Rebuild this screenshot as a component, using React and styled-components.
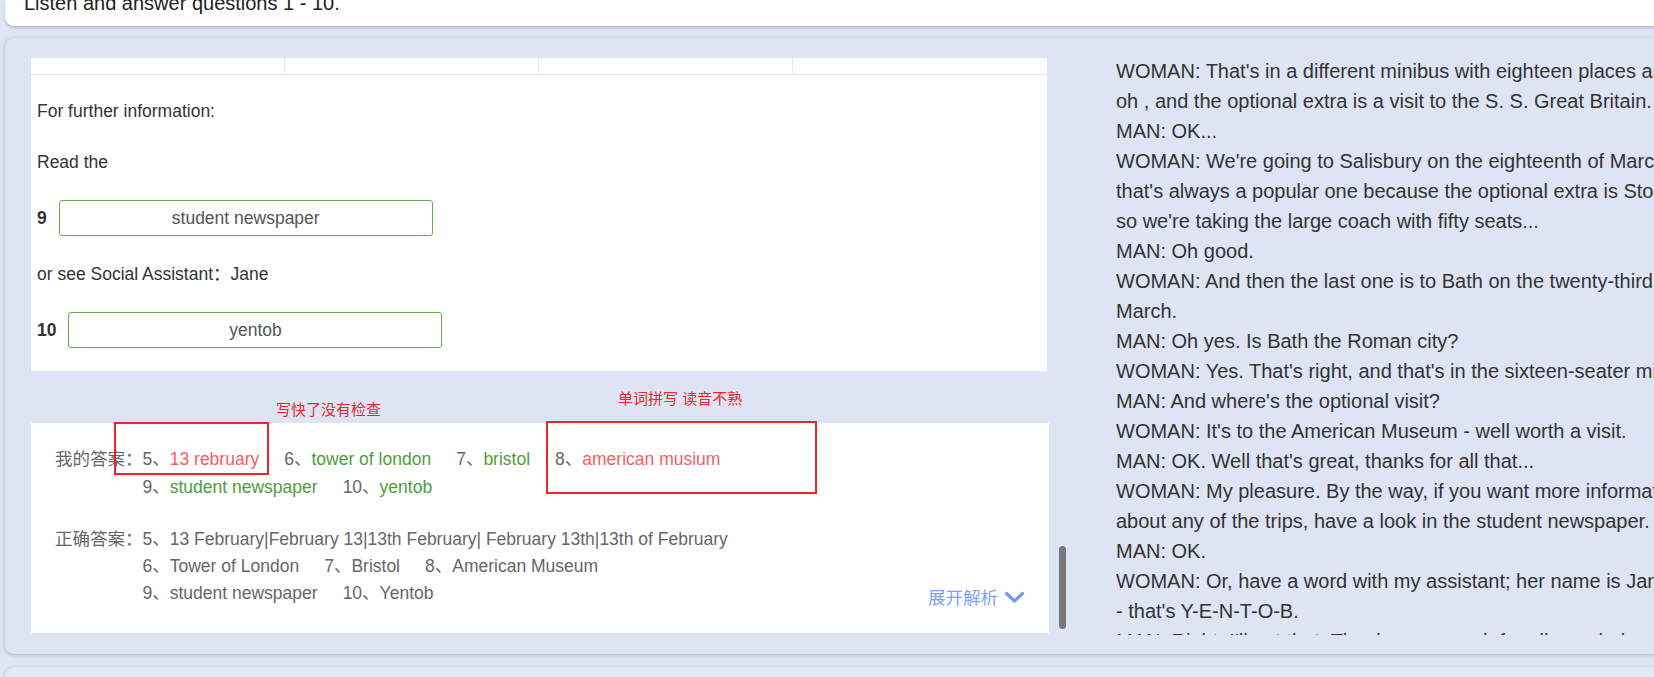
import React from "react";
import styled, { createGlobalStyle } from "styled-components";

const GlobalStyle = createGlobalStyle`
  html, body {
    margin: 0;
    padding: 0;
    overflow: hidden;
    background: #dfe5f3;
    font-family: "Liberation Sans", Arial, "Noto Sans CJK SC", sans-serif;
  }
`;

const myAnswers = [
  { no: 5, text: "13 rebruary", ok: false },
  { no: 6, text: "tower of london", ok: true },
  { no: 7, text: "bristol", ok: true },
  { no: 8, text: "american musium", ok: false },
  { no: 9, text: "student newspaper", ok: true },
  { no: 10, text: "yentob", ok: true },
];

const rightAnswers = [
  { no: 5, text: "13 February|February 13|13th February| February 13th|13th of February" },
  { no: 6, text: "Tower of London" },
  { no: 7, text: "Bristol" },
  { no: 8, text: "American Museum" },
  { no: 9, text: "student newspaper" },
  { no: 10, text: "Yentob" },
];

const transcript = [
  "WOMAN: That's in a different minibus with eighteen places and it's twenty-four pounds,",
  "oh , and the optional extra is a visit to the S. S. Great Britain.",
  "MAN: OK...",
  "WOMAN: We're going to Salisbury on the eighteenth of March and",
  "that's always a popular one because the optional extra is Stonehenge,",
  "so we're taking the large coach with fifty seats...",
  "MAN: Oh good.",
  "WOMAN: And then the last one is to Bath on the twenty-third of",
  "March.",
  "MAN: Oh yes. Is Bath the Roman city?",
  "WOMAN: Yes. That's right, and that's in the sixteen-seater minibus.",
  "MAN: And where's the optional visit?",
  "WOMAN: It's to the American Museum - well worth a visit.",
  "MAN: OK. Well that's great, thanks for all that...",
  "WOMAN: My pleasure. By the way, if you want more information",
  "about any of the trips, have a look in the student newspaper.",
  "MAN: OK.",
  "WOMAN: Or, have a word with my assistant; her name is Jane",
  "- that's Y-E-N-T-O-B.",
  "MAN: Right, I'll get that. Thanks very much for all your help.",
];

const App = () => {
  return (
    <>
      <GlobalStyle />
      <Page>
        <TopCard>
          <TopTitle>Listen and answer questions 1 - 10.</TopTitle>
        </TopCard>

        <MainCard>
          <LeftCol>
            <QuestionPanel>
              <TableTail>
                <TableCell />
                <TableCell />
                <TableCell />
                <TableCell $last />
              </TableTail>
              <QuestionBody>
                <Para>For further information:</Para>
                <Para>Read the</Para>
                <InputRow>
                  <QNum>9</QNum>
                  <AnswerInput readOnly value="student newspaper" />
                </InputRow>
                <Para>or see Social Assistant：Jane</Para>
                <InputRow>
                  <QNum>10</QNum>
                  <AnswerInput readOnly value="yentob" />
                </InputRow>
              </QuestionBody>
            </QuestionPanel>

            <ResultPanel>
              <AnswerBlock>
                <BlockLabel>我的答案：</BlockLabel>
                <AnswerList>
                  {myAnswers.map((a) => (
                    <AnswerItem key={a.no}>
                      {a.no}、<AnswerText $tone={a.ok ? "good" : "bad"}>{a.text}</AnswerText>
                    </AnswerItem>
                  ))}
                </AnswerList>
              </AnswerBlock>

              <AnswerBlock>
                <BlockLabel>正确答案：</BlockLabel>
                <AnswerList $tight>
                  {rightAnswers.map((a) => (
                    <AnswerItem key={a.no}>
                      {a.no}、{a.text}
                    </AnswerItem>
                  ))}
                </AnswerList>
                <Toggle>
                  展开解析
                  <svg width="21" height="13" viewBox="0 0 21 13" fill="none">
                    <path
                      d="M2.5 2.5 L10.5 10 L18.5 2.5"
                      stroke="#6f9cf3"
                      strokeWidth="3.2"
                      strokeLinecap="round"
                      strokeLinejoin="round"
                    />
                  </svg>
                </Toggle>
              </AnswerBlock>
            </ResultPanel>

            {/* hand-written marks over the result */}
            <Note style={{ left: 245, top: 342 }}>写快了没有检查</Note>
            <MarkBox style={{ left: 83, top: 364, width: 155, height: 53 }} />
            <Note style={{ left: 587, top: 331 }}>单词拼写 读音不熟</Note>
            <MarkBox style={{ left: 515, top: 363, width: 271, height: 73 }} />

            <ScrollThumb />
          </LeftCol>

          <RightCol>
            <Script>
              {transcript.map((line, i) => (
                <ScriptLine key={i}>{line}</ScriptLine>
              ))}
            </Script>
          </RightCol>
        </MainCard>

        <NextCard />
      </Page>
    </>
  );
};

export default App;

const Page = styled.div`
  width: 1900px;
  padding-left: 5px;
`;

const TopCard = styled.div`
  height: 26px;
  display: flex;
  align-items: flex-end;
  padding: 0 0 12px 19px;
  box-sizing: border-box;
  overflow: hidden;
  background: #fff;
  border-radius: 0 0 9px 9px;
  box-shadow: 0 2px 3px rgba(0, 0, 0, 0.16);
`;

const TopTitle = styled.div`
  font-size: 20px;
  line-height: 22px;
  color: #222;
`;

const MainCard = styled.section`
  margin-top: 12px;
  height: 616px;
  box-sizing: border-box;
  display: flex;
  padding: 20px 0 21px 26px;
  background: #dee4f4;
  border-radius: 9px;
  box-shadow: 0 1px 4px rgba(0, 0, 0, 0.22);
`;

const LeftCol = styled.div`
  position: relative;
  flex-shrink: 0;
  width: 1036px;
  height: 575px;
  overflow: hidden;
`;

const QuestionPanel = styled.div`
  width: 1016px;
  background: #fff;
  display: flex;
  flex-direction: column;
`;

const TableTail = styled.div`
  display: grid;
  grid-template-columns: repeat(4, 1fr);
  height: 16px;
  border-bottom: 1px solid #e6e6e6;
`;

const TableCell = styled.div`
  border-right: ${({ $last }) => ($last ? "none" : "1px solid #e6e6e6")};
`;

const QuestionBody = styled.div`
  display: flex;
  flex-direction: column;
  gap: 25.5px;
  padding: 24px 6px 23px;
  font-size: 17.5px;
  color: #333;
`;

const Para = styled.p`
  margin: 0;
  line-height: 25px;
`;

const InputRow = styled.div`
  display: flex;
  align-items: center;
`;

const QNum = styled.span`
  margin-right: 12px;
  font-weight: bold;
`;

const AnswerInput = styled.input`
  width: 374px;
  height: 36px;
  box-sizing: border-box;
  border: 1px solid #62b04e;
  border-radius: 3px;
  outline: none;
  text-align: center;
  font-family: inherit;
  font-size: 17.5px;
  color: #555;
  background: #fff;
`;

const ResultPanel = styled.div`
  margin-top: 52px;
  width: 1018px;
  box-sizing: border-box;
  padding: 23px 24px 30px 24px;
  background: #fff;
  display: flex;
  flex-direction: column;
  gap: 24.5px;
  font-size: 17.5px;
  color: #666;
`;

const AnswerBlock = styled.div`
  display: flex;
  align-items: flex-start;
`;

const BlockLabel = styled.span`
  line-height: 27.5px;
  white-space: nowrap;
`;

const AnswerList = styled.div`
  width: 622px;
  display: flex;
  flex-wrap: wrap;
  column-gap: 25px;
  line-height: ${({ $tight }) => ($tight ? "27px" : "27.5px")};
`;

const AnswerItem = styled.span`
  white-space: nowrap;
`;

const AnswerText = styled.span`
  color: ${({ $tone }) => ($tone === "good" ? "#4c9e3b" : "#f36060")};
`;

const Toggle = styled.span`
  margin-left: auto;
  margin-bottom: -3px;
  align-self: flex-end;
  display: flex;
  align-items: center;
  gap: 6px;
  line-height: 24px;
  color: #7aa4f3;
`;

const Note = styled.span`
  position: absolute;
  font-size: 15px;
  line-height: 20px;
  color: #e8262b;
  white-space: nowrap;
`;

const MarkBox = styled.div`
  position: absolute;
  box-sizing: border-box;
  border: 2px solid #e8262b;
`;

const ScrollThumb = styled.div`
  position: absolute;
  left: 1028px;
  top: 488px;
  width: 7px;
  height: 83px;
  border-radius: 3.5px;
  background: #76787c;
`;

const RightCol = styled.div`
  margin-left: 49px;
  flex: 1;
  min-width: 0;
  height: 577px;
  overflow: hidden;
  font-size: 20px;
  line-height: 30px;
  color: #333;
`;

const Script = styled.div`
  margin-top: -2px;
`;

const ScriptLine = styled.div`
  white-space: nowrap;
`;

const NextCard = styled.div`
  margin-top: 13px;
  height: 60px;
  background: #e3e8f5;
  border-radius: 9px;
  box-shadow: 0 1px 4px rgba(0, 0, 0, 0.22);
`;
